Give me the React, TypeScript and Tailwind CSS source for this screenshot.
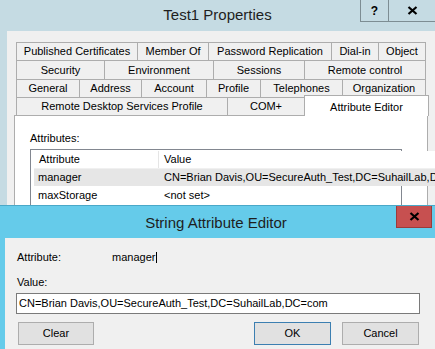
import React from "react";

const Tab = ({ w, label, last }: { w: number; label: string; last?: boolean }) => (
  <div
    style={{ width: w }}
    className={
      "flex-none h-full flex items-center justify-center border-t border-l border-[#adadad] bg-[#f0f0f0] " +
      (last ? "border-r" : "")
    }
  >
    {label}
  </div>
);

const rows: [number, string][][] = [
  [[121, "Published Certificates"], [71, "Member Of"], [123, "Password Replication"], [47, "Dial-in"], [48, "Object"]],
  [[88, "Security"], [109, "Environment"], [91, "Sessions"], [122, "Remote control"]],
  [[63, "General"], [62, "Address"], [65, "Account"], [54, "Profile"], [82, "Telephones"], [84, "Organization"]],
];
const rowH = ["h-[18px]", "h-[19px]", "h-[18px]"];

export default function App() {
  return (
    <div className="w-[435px] h-[349px] overflow-hidden flex flex-col font-['Liberation_Sans',Arial,sans-serif] text-[11px] text-black">
      {/* Properties window */}
      <div className="h-[205px] flex-none flex flex-col bg-[#c5dbe3] overflow-hidden">
        <div className="h-[31px] flex-none flex">
          <div className="flex-1" />
          <div className="w-[110px] flex-none text-center text-[15px] leading-[18px] pt-[6px] text-[#1e1e1e] whitespace-nowrap">
            Test1 Properties
          </div>
          <div className="flex-1 flex justify-end items-start">
            <div className="w-[28px] h-[22px] border-l border-b border-[#7d8d93] flex items-center justify-center font-bold text-[12px]">
              ?
            </div>
            <div className="w-[47px] h-[22px] border-l border-b border-[#7d8d93] flex items-center justify-center">
              <svg width="11" height="9" viewBox="0 0 11 9">
                <path d="M1.5 1 L9.5 8 M9.5 1 L1.5 8" stroke="#000" strokeWidth="2.2" />
              </svg>
            </div>
          </div>
        </div>
        <div className="flex-1 ml-[7px] bg-[#f0f0f0] pt-[11px] flex flex-col">
          <div className="pl-[9px] flex flex-col">
            {rows.map((r, i) => (
              <div key={i} className={"flex " + rowH[i]}>
                {r.map(([w, l], j) => (
                  <Tab key={j} w={w} label={l} last={j === r.length - 1} />
                ))}
              </div>
            ))}
            <div className="flex h-[18px] items-end">
              <Tab w={211} label="Remote Desktop Services Profile" />
              <div className="w-[77px] h-full flex-none flex items-center justify-center border-t border-l border-[#adadad] bg-[#f0f0f0]">
                COM+
              </div>
              <div className="relative z-10 -mb-px w-[125px] h-[21px] flex-none flex justify-center pt-[3px] border-t border-l border-r border-[#adadad] bg-white">
                Attribute Editor
              </div>
            </div>
          </div>
          {/* panel */}
          <div className="ml-[7px] w-[414px] flex-1 bg-white border border-[#adadad] pl-[15px] pt-[16px]">
            <div className="leading-[13px]">Attributes:</div>
            <div className="mt-[4px] w-[372px] h-[80px] border border-[#828790] flex bg-white">
              <div className="flex-1 flex flex-col pl-[3px] pt-px">
                <div className="h-[18px] flex items-center bg-white border-b border-[#f0f0f0]">
                  <div className="w-[125px] h-full flex items-center pl-[5px] border-r border-[#e5e5e5]">Attribute</div>
                  <div className="pl-[5px]">Value</div>
                </div>
                <div className="h-[17px] flex items-center bg-[#e6e6e6] whitespace-nowrap overflow-hidden">
                  <div className="w-[126px] pl-[4px] flex-none">manager</div>
                  <div className="pl-[4px]">CN=Brian Davis,OU=SecureAuth_Test,DC=SuhailLab,DC=com</div>
                </div>
                <div className="h-[18px] flex items-center whitespace-nowrap">
                  <div className="w-[126px] pl-[4px] flex-none">maxStorage</div>
                  <div className="pl-[4px]">&lt;not set&gt;</div>
                </div>
              </div>
              <div className="w-[17px] flex-none border-l border-[#e6e6e6] bg-[#f7f7f7] flex justify-center pt-[8px]">
                <svg width="9" height="6" viewBox="0 0 9 6">
                  <path d="M1 5 L4.5 1.5 L8 5" stroke="#606060" strokeWidth="1.2" fill="none" />
                </svg>
              </div>
            </div>
          </div>
        </div>
      </div>
      {/* String Attribute Editor dialog */}
      <div className="flex-1 flex flex-col bg-[#65cbea] border-t border-[#4aa8c8]">
        <div className="h-[32px] flex-none flex">
          <div className="flex-1" />
          <div className="w-[150px] flex-none text-center text-[15px] leading-[18px] pt-[8px] text-[#1e1e1e] whitespace-nowrap">
            String Attribute Editor
          </div>
          <div className="flex-1 flex justify-end items-start pr-[3px]">
            <div className="w-[36px] h-[22px] bg-[#c75050] border border-[#9b3b3b] border-t-0 flex items-center justify-center">
              <svg width="11" height="9" viewBox="0 0 11 9">
                <path d="M1.5 1 L9.5 8 M9.5 1 L1.5 8" stroke="#000" strokeWidth="2.2" />
              </svg>
            </div>
          </div>
        </div>
        <div className="flex-1 ml-[5px] bg-[#f0f0f0] pl-[11px] pt-[13px] flex flex-col">
          <div className="flex items-center h-[13px] leading-[13px]">
            <div className="w-[96px] pl-px">Attribute:</div>
            <div>manager</div>
            <div className="w-px h-[11px] bg-black ml-px" />
          </div>
          <div className="mt-[12px] pl-px leading-[13px]">Value:</div>
          <div className="mt-[4px] w-[404px] h-[21px] bg-white border border-[#7a7a7a] flex items-center pl-[2px] whitespace-nowrap">
            CN=Brian Davis,OU=SecureAuth_Test,DC=SuhailLab,DC=com
          </div>
          <div className="mt-[8px] flex h-[23px] w-[403px]">
            <div className="ml-[2px] w-[76px] h-full bg-[#e1e1e1] border border-[#adadad] flex items-center justify-center">Clear</div>
            <div className="flex-1" />
            <div className="w-[77px] h-full bg-[#e1e1e1] border border-[#3c7fb1] flex items-center justify-center">OK</div>
            <div className="ml-[11px] w-[77px] h-full bg-[#e1e1e1] border border-[#adadad] flex items-center justify-center">Cancel</div>
          </div>
        </div>
      </div>
    </div>
  );
}
